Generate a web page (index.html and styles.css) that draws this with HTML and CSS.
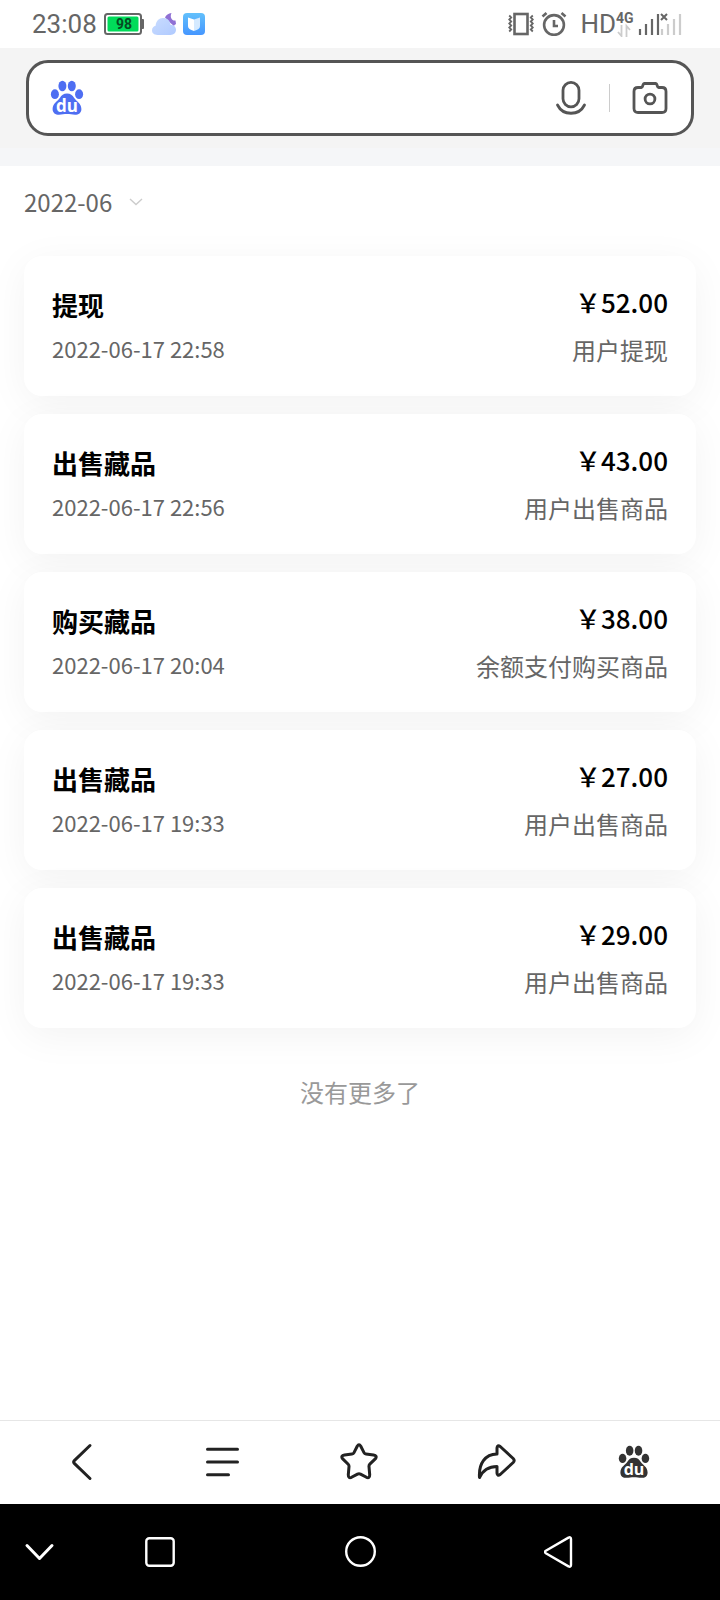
FILE: index.html
```html
<!DOCTYPE html>
<html lang="zh-CN">
<head>
<meta charset="utf-8">
<meta name="viewport" content="width=device-width, initial-scale=1">
<title>2022-06</title>
<link rel="stylesheet" href="styles.css">
</head>
<body>
<header class="status">
  <div class="status-group">
    <span class="clock">23:08</span>
    <svg class="battery" width="40" height="22" viewBox="0 0 40 22">
      <rect x="1" y="1" width="36" height="20" rx="2.500" fill="#fff" stroke="#666" stroke-width="2"/>
      <rect x="37" y="6" width="3" height="10" rx="1" fill="#666"/>
      <rect x="3.500" y="3.500" width="31" height="15" rx="1.500" fill="#00dc5a"/>
      <text x="20" y="16" text-anchor="middle" class="battery-text">98</text>
    </svg>
    <svg width="24" height="24" viewBox="0 0 24 24">
      <defs><linearGradient id="cloud" x2="1" y2="1"><stop stop-color="#c9dcff"/><stop offset="1" stop-color="#b0caff"/></linearGradient></defs>
      <path d="M19.500 1c-3 .5-5.500 2-6.500 4.500l6 6 3 2.500c.5-1 1-1.500 2-2l-.5-3.500c-3.500.5-6-3-4-7.500z" fill="#8f70d4"/>
      <path d="M5.500 23C2 23 0 21 0 18.300c0-2.600 1.800-4.300 3.600-4.600C4 9 7 6 11 6c4.300 0 7 2.700 7.500 6.700 3.500.2 5.500 2.300 5.500 5.100 0 3-2.200 5.200-5.500 5.200z" fill="url(#cloud)"/>
    </svg>
    <svg class="shield" width="22" height="22" viewBox="0 0 22 22">
      <defs><linearGradient id="app" x2="0" y2="1"><stop stop-color="#62c0fb"/><stop offset="1" stop-color="#4596ff"/></linearGradient></defs>
      <rect width="22" height="22" rx="4" fill="url(#app)"/>
      <path d="M5 4.500l6 2v11.500c-4-1.500-6-2.500-6-5z" fill="#fff"/>
      <path d="M17 4.500l-6 2v11.500c4-1.500 6-2.500 6-5z" fill="#d5eaff"/>
    </svg>
  </div>
  <div class="status-group">
    <svg width="26" height="24" viewBox="0 0 26 24" fill="none" stroke="#666">
      <rect x="6.500" y="2" width="13" height="20" stroke-width="2.600"/>
      <path d="M1.200 3.500l2 2-2 2 2 2-2 2 2 2-2 2 2 2-2 2M24.800 3.500l-2 2 2 2-2 2 2 2-2 2 2 2-2 2 2 2" stroke-width="1.800"/>
    </svg>
    <svg class="alarm" width="26" height="24" viewBox="0 0 26 24" fill="none" stroke="#666" stroke-width="2.600">
      <circle cx="13" cy="13" r="9.900"/>
      <path d="M1.500 4.500l4-3.500M24.500 4.500l-4-3.500M13 8v6h4"/>
    </svg>
    <span class="hd">HD</span>
    <svg class="network" width="18" height="26" viewBox="0 0 18 26">
      <text x="0" y="12" class="network-text">4G</text>
      <path d="M5.500 14v11L2 21M10.500 26V15l3.500 4" fill="none" stroke="#ccc" stroke-width="1.800"/>
    </svg>
    <svg width="44" height="24" viewBox="0 0 44 24" fill="none" stroke-width="2.200">
      <path d="M2 17v6M8 12v11M14 7v16M20 2v21" stroke="#666"/>
      <path d="M24 17v6M30 12v11M36 7v16M42 2v21" stroke="#ccc"/>
      <path d="M23 2l6 6M29 2l-6 6" stroke="#666" stroke-width="2"/>
    </svg>
  </div>
</header>

<form class="search-area" role="search">
  <div class="search-box">
    <svg class="search-paw" width="34" height="36" viewBox="0 0 34 36">
      <g fill="currentColor">
        <ellipse cx="12.400" cy="6" rx="4" ry="5.300"/>
        <ellipse cx="21.800" cy="6" rx="4" ry="5.300"/>
        <ellipse cx="4.900" cy="14.200" rx="4" ry="4.900"/>
        <ellipse cx="29.100" cy="14.200" rx="4" ry="4.900"/>
        <path d="M17 13.500c3.600 0 5.400 1.500 7.200 4.500 1.800 3 7.200 5 7.200 11 0 4-2.800 5.800-6.400 5.800-3 0-5-.7-8-.7s-5 .7-8 .7c-3.600 0-6.400-1.800-6.400-5.800 0-6 5.400-8 7.200-11s3.600-4.500 7.200-4.500z"/>
      </g>
      <text x="17" y="32" class="paw-text" text-anchor="middle">du</text>
    </svg>
    <input class="search-input" type="text" aria-label="搜索">
    <button class="icon-button" type="button" aria-label="语音">
      <svg width="32" height="36" viewBox="0 0 32 36" fill="none" stroke="#555" stroke-width="2.800" stroke-linecap="round">
        <rect x="8" y="2.300" width="16" height="24.500" rx="8"/>
        <path d="M2.500 25c5.500 11 21.500 11 27 0"/>
      </svg>
    </button>
    <span class="divider"></span>
    <button class="icon-button" type="button" aria-label="拍照">
      <svg width="36" height="36" viewBox="0 0 36 36" fill="none" stroke="#555" stroke-width="2.800" stroke-linejoin="round">
        <path d="M6 7.500h3.500c1.500 0 1-4 3-4h11c2 0 1.500 4 3 4H30c2.500 0 4 1.500 4 4v17c0 2.500-1.500 4-4 4H6c-2.500 0-4-1.500-4-4v-17c0-2.500 1.500-4 4-4z"/>
        <circle cx="18" cy="19" r="4.900"/>
      </svg>
    </button>
  </div>
</form>

<main class="content">
  <div class="month">
    <select class="month-select" aria-label="月份"><option>2022-06</option></select>
    <svg width="14" height="8" viewBox="0 0 14 8" fill="none" stroke="#ccc" stroke-width="1.400"><path d="M1 1l6 5.500L13 1"/></svg>
  </div>
  <ul class="records">
    <li class="card">
      <div class="info"><h2 class="title">提现</h2><time class="date">2022-06-17 22:58</time></div>
      <div class="sum"><strong class="amount">￥52.00</strong><span class="note">用户提现</span></div>
    </li>
    <li class="card">
      <div class="info"><h2 class="title">出售藏品</h2><time class="date">2022-06-17 22:56</time></div>
      <div class="sum"><strong class="amount">￥43.00</strong><span class="note">用户出售商品</span></div>
    </li>
    <li class="card">
      <div class="info"><h2 class="title">购买藏品</h2><time class="date">2022-06-17 20:04</time></div>
      <div class="sum"><strong class="amount">￥38.00</strong><span class="note">余额支付购买商品</span></div>
    </li>
    <li class="card">
      <div class="info"><h2 class="title">出售藏品</h2><time class="date">2022-06-17 19:33</time></div>
      <div class="sum"><strong class="amount">￥27.00</strong><span class="note">用户出售商品</span></div>
    </li>
    <li class="card">
      <div class="info"><h2 class="title">出售藏品</h2><time class="date">2022-06-17 19:33</time></div>
      <div class="sum"><strong class="amount">￥29.00</strong><span class="note">用户出售商品</span></div>
    </li>
  </ul>
  <p class="end">没有更多了</p>
</main>

<nav class="toolbar">
  <button class="tool" type="button" aria-label="后退">
    <svg width="40" height="40" viewBox="0 0 40 40"><path d="M24 3.500L8.300 18.600q-1.400 1.400 0 2.800L24 36.500"/></svg>
  </button>
  <button class="tool" type="button" aria-label="菜单">
    <svg width="40" height="40" viewBox="0 0 40 40"><path d="M4.500 7.200h30M4.500 20h30M4.500 32.800h21"/></svg>
  </button>
  <button class="tool" type="button" aria-label="收藏">
    <svg width="40" height="40" viewBox="0 0 40 40"><path d="M17.200 4.300q1.800-3 3.600 0l3.200 6.300q.6 1.200 2 1.400l7.500 1q4 .8 2 3.700l-5.700 5.500q-1 1-.8 2.500l.7 8q0 4-3.200 2.600l-6-3.200q-1.500-.8-3 0l-6 3.200q-3.200 1.400-3.200-2.600l.7-8q.2-1.500-.8-2.500l-5.700-5.500q-2-2.900 2-3.700l7.500-1q1.400-.2 2-1.400z"/></svg>
  </button>
  <button class="tool" type="button" aria-label="分享">
    <svg width="40" height="40" viewBox="0 0 40 40"><path d="M20 12V6q.3-3.500 3.200-1.500l13 12q2 2 0 4L23.200 32.500Q20.300 34.500 20 31v-6.500C12 24.500 6 28 2.500 35.500 1.500 22 8 12 20 12z"/></svg>
  </button>
  <button class="tool tool-home" type="button" aria-label="首页">
    <svg width="34" height="34" viewBox="0 0 34 36">
      <g fill="currentColor">
        <ellipse cx="12.400" cy="6" rx="4" ry="5.300"/>
        <ellipse cx="21.800" cy="6" rx="4" ry="5.300"/>
        <ellipse cx="4.900" cy="14.200" rx="4" ry="4.900"/>
        <ellipse cx="29.100" cy="14.200" rx="4" ry="4.900"/>
        <path d="M17 13.500c3.600 0 5.400 1.500 7.200 4.500 1.800 3 7.200 5 7.200 11 0 4-2.800 5.800-6.400 5.800-3 0-5-.7-8-.7s-5 .7-8 .7c-3.600 0-6.400-1.800-6.400-5.800 0-6 5.400-8 7.200-11s3.600-4.500 7.200-4.500z"/>
      </g>
      <text x="17" y="32" class="paw-text" text-anchor="middle">du</text>
    </svg>
  </button>
</nav>

<nav class="system">
  <button class="key key-edge" type="button" aria-label="收起"><svg width="32" height="32" viewBox="0 0 32 32"><path d="M3 9.500L15.500 22.500 28 9.500" stroke-width="3"/></svg></button>
  <button class="key key-side" type="button" aria-label="最近任务"><svg width="32" height="32" viewBox="0 0 32 32"><rect x="2.300" y="2.300" width="27.400" height="27.400" rx="3"/></svg></button>
  <button class="key key-center" type="button" aria-label="主屏幕"><svg width="32" height="32" viewBox="0 0 32 32"><circle cx="16.500" cy="15.500" r="14.300"/></svg></button>
  <button class="key key-side" type="button" aria-label="返回"><svg width="32" height="32" viewBox="0 0 32 32"><path d="M1.800 14.700L24.500 1.600q2.500-1 2.500 1.400v26q0 2.400-2.500 1.400L1.800 17.300q-1.800-1.300 0-2.600z"/></svg></button>
  <span class="key-edge"></span>
</nav>
</body>
</html>
```
FILE: styles.css
```css
* { box-sizing: border-box; }

body {
  margin: 0;
  min-height: 100vh;
  display: flex;
  flex-direction: column;
  background: #fff;
  color: #000;
  font-family: "Noto Sans CJK SC", sans-serif;
}

button {
  padding: 0;
  border: 0;
  background: none;
}

svg { display: block; flex: none; }

.paw-text {
  font: 700 17px "Open Sans", sans-serif;
  fill: #fff;
}

/* status bar */
.status {
  display: flex;
  justify-content: space-between;
  align-items: center;
  height: 48px;
  padding: 0 38px 0 32px;
  background: #fff;
  color: #666;
  font-family: Roboto, sans-serif;
  font-size: 26px;
  line-height: 48px;
}
.status-group { display: flex; align-items: center; }
.battery { margin: 0 8px 0 7px; }
.battery-text { font: 700 14px Roboto, sans-serif; fill: #064a22; }
.shield { margin-left: 7px; }
.alarm { margin: 0 13px 0 7px; }
.network { margin-right: 4px; }
.network-text { font: 700 14px Roboto, sans-serif; fill: #666; }

/* search */
.search-area {
  padding: 12px 26px 12px;
  background: #f4f4f4;
  border-bottom: 18px solid #f5f6f8;
}
.search-box {
  display: flex;
  align-items: center;
  height: 76px;
  padding: 0 23px 0 21px;
  border: 3px solid #555;
  border-radius: 22px;
  background: #fff;
}
.search-paw { color: #4e6ef2; }
.search-input {
  flex: 1;
  min-width: 0;
  height: 48px;
  border: 0;
  outline: 0;
  background: none;
  font: 26px "Noto Sans CJK SC", sans-serif;
}
.divider {
  width: 1px;
  height: 28px;
  margin: 0 22px;
  background: #ccc;
}

/* records */
.content {
  flex: 1;
  padding: 12px 24px 0;
}
.month {
  display: flex;
  align-items: center;
  gap: 16px;
  height: 48px;
}
.month-select {
  appearance: none;
  padding: 0;
  border: 0;
  background: none;
  color: #666;
  font: 24px/48px "Noto Sans CJK SC", sans-serif;
}
.records {
  display: flex;
  flex-direction: column;
  gap: 18px;
  margin: 30px 0 0;
  padding: 0;
  list-style: none;
}
.card {
  display: flex;
  justify-content: space-between;
  padding: 24px 28px 20px;
  border-radius: 18px;
  background: #fff;
  box-shadow: 0 8px 40px rgba(0, 0, 0, 0.05);
}
.info, .sum {
  display: flex;
  flex-direction: column;
}
.sum { align-items: flex-end; }
.title {
  margin: 0;
  font-size: 26px;
  font-weight: 700;
  line-height: 50px;
}
.date {
  color: #666;
  font-size: 22px;
  line-height: 36px;
}
.amount {
  font-size: 26px;
  font-weight: 500;
  line-height: 44px;
}
.note {
  color: #666;
  font-size: 24px;
  line-height: 52px;
}
.end {
  margin: 46px 0 24px;
  color: #999;
  font-size: 24px;
  line-height: 36px;
  text-align: center;
}

/* browser toolbar */
.toolbar {
  display: flex;
  height: 84px;
  padding: 0 17px 2px;
  border-top: 1px solid #e6e6e6;
  background: #fff;
}
.tool {
  flex: 1;
  display: flex;
  align-items: center;
  justify-content: center;
  color: #333;
}
.tool > svg > path {
  fill: none;
  stroke: #222;
  stroke-width: 3px;
  stroke-linecap: round;
  stroke-linejoin: round;
}

/* system keys */
.system {
  display: flex;
  height: 96px;
  background: #000;
}
.key {
  display: flex;
  align-items: center;
  justify-content: center;
}
.key svg {
  fill: none;
  stroke: #fff;
  stroke-width: 2.4px;
  stroke-linecap: round;
  stroke-linejoin: round;
}
.key-edge { flex: 1; }
.key-side { flex: 2; }
.key-center { flex: 3; }
```
